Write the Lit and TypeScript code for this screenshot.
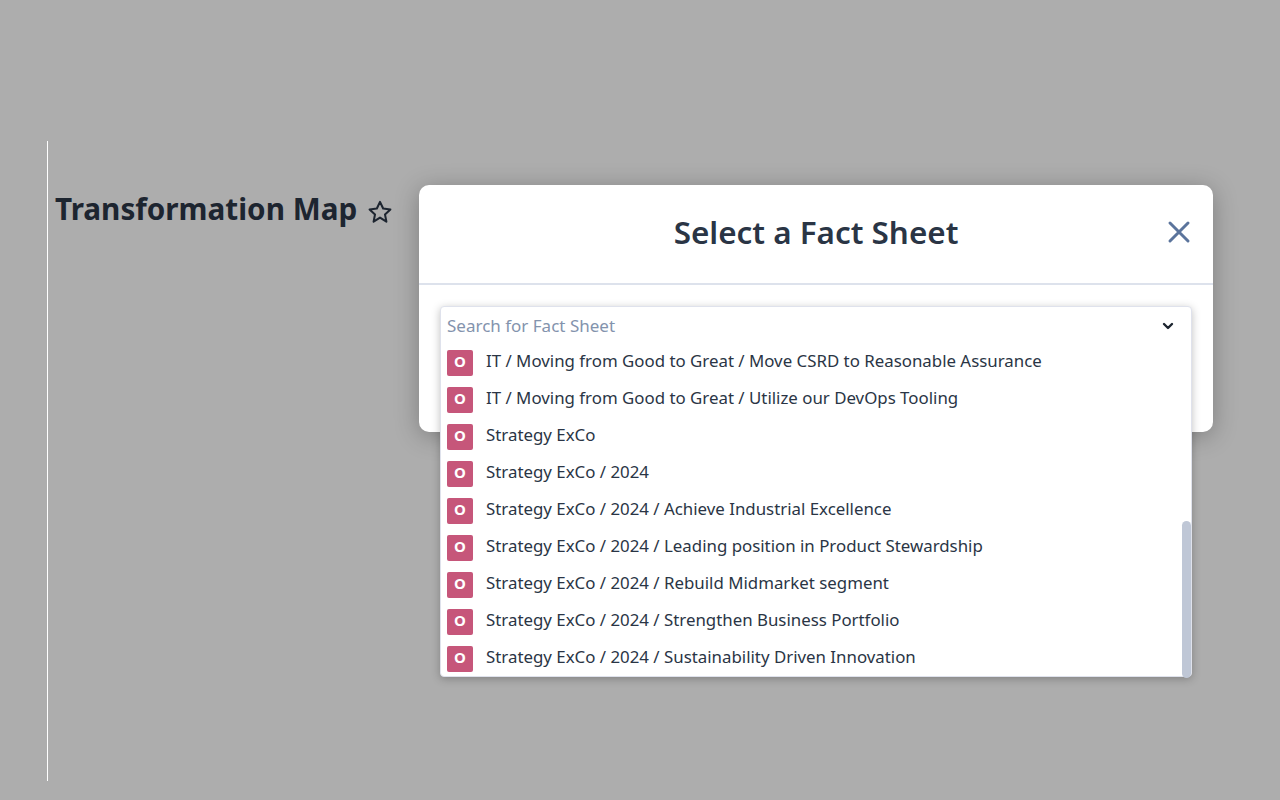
import { LitElement, html, css } from "lit";
import { customElement } from "lit/decorators.js";

const ITEMS = [
  "IT / Moving from Good to Great / Move CSRD to Reasonable Assurance",
  "IT / Moving from Good to Great / Utilize our DevOps Tooling",
  "Strategy ExCo",
  "Strategy ExCo / 2024",
  "Strategy ExCo / 2024 / Achieve Industrial Excellence",
  "Strategy ExCo / 2024 / Leading position in Product Stewardship",
  "Strategy ExCo / 2024 / Rebuild Midmarket segment",
  "Strategy ExCo / 2024 / Strengthen Business Portfolio",
  "Strategy ExCo / 2024 / Sustainability Driven Innovation",
];

@customElement("app-root")
export class AppRoot extends LitElement {
  static styles = css`
    :host {
      display: block;
      width: 1280px;
      height: 800px;
      background: #adadad;
      font-family: "Noto Sans", "Open Sans", sans-serif;
      overflow: hidden;
      position: relative;
    }
    .page {
      box-sizing: border-box;
      height: 800px;
      padding: 141px 0 19px 47px;
      display: flex;
    }
    .content {
      flex: 1;
      border-left: 1px solid #fff;
      padding: 47px 0 0 7px;
    }
    .heading {
      display: flex;
      align-items: center;
      gap: 10px;
    }
    h1 {
      margin: 0;
      font-size: 29.7px;
      line-height: 41px;
      font-weight: 700;
      color: #1d2530;
      white-space: nowrap;
    }
    .star {
      width: 26px;
      height: 26px;
      margin-top: 7px;
      display: block;
    }
    .modal {
      position: absolute;
      left: 419px;
      top: 185px;
      width: 794px;
      height: 247px;
      background: #fff;
      border-radius: 10px;
      box-shadow: 0 4px 24px rgba(0, 0, 0, 0.28);
    }
    .modal-head {
      height: 100px;
      box-sizing: border-box;
      border-bottom: 2px solid #dde2ec;
      display: flex;
      align-items: center;
      justify-content: center;
      position: relative;
    }
    h2 {
      margin: 0;
      font-size: 31.4px;
      font-weight: 600;
      color: #2a3545;
      line-height: 41px;
      position: relative;
      top: -3px;
    }
    .close {
      position: absolute;
      right: 22.5px;
      top: 35px;
      width: 24px;
      height: 24px;
      display: block;
    }
    .dropdown {
      position: absolute;
      left: 440px;
      top: 306px;
      width: 752px;
      height: 371px;
      box-sizing: border-box;
      background: #fff;
      border: 1px solid #dfe2ec;
      border-radius: 4px;
      box-shadow: 0 2px 8px rgba(0, 0, 0, 0.25);
      display: flex;
      flex-direction: column;
    }
    .search {
      flex: none;
      height: 38px;
      padding: 0 16px 0 6px;
      display: flex;
      align-items: center;
      justify-content: space-between;
      color: #8393ad;
      font-size: 17px;
    }
    .search span {
      padding-bottom: 2px;
    }
    .chev {
      width: 14px;
      height: 14px;
      display: block;
    }
    .list {
      flex: 1;
      position: relative;
    }
    .row {
      height: 37px;
      padding-left: 6px;
      display: flex;
      align-items: center;
      gap: 13px;
      font-size: 16.85px;
      color: #2a3545;
      white-space: nowrap;
      position: relative;
      top: -1px;
    }
    .row .label {
      padding-bottom: 4px;
    }
    .badge {
      width: 26px;
      height: 26px;
      flex: none;
      box-sizing: border-box;
      padding-bottom: 3px;
      border-radius: 2px;
      background: #c6567a;
      color: #fff;
      font-size: 15px;
      font-weight: 700;
      display: flex;
      align-items: center;
      justify-content: center;
    }
    .thumb {
      position: absolute;
      right: 0;
      bottom: 0;
      width: 9px;
      height: 157px;
      background: #bfc7d6;
      border-radius: 5px;
    }
  `;

  render() {
    return html`
      <div class="page">
        <div class="content">
          <div class="heading">
            <h1>Transformation Map</h1>
            <svg class="star" viewBox="0 0 24 24" fill="none" stroke="#1d2530" stroke-width="1.9" stroke-linejoin="round">
              <path d="M12 2.6l2.9 6.2 6.7.8-5 4.6 1.3 6.7L12 17.1l-5.9 3.8 1.3-6.7-5-4.6 6.7-.8z" />
            </svg>
          </div>
        </div>
      </div>
      <div class="modal">
        <div class="modal-head">
          <h2>Select a Fact Sheet</h2>
          <svg class="close" viewBox="0 0 24 24" fill="none" stroke="#5b749c" stroke-width="3" stroke-linecap="round">
            <path d="M3 3l18 18M21 3L3 21" />
          </svg>
        </div>
      </div>
      <div class="dropdown">
        <div class="search">
          <span>Search for Fact Sheet</span>
          <svg class="chev" viewBox="0 0 14 14" fill="none" stroke="#1d2530" stroke-width="2.4" stroke-linecap="round" stroke-linejoin="round">
            <path d="M3 5l4 4 4-4" />
          </svg>
        </div>
        <div class="list">
          ${ITEMS.map(
            (t) => html`<div class="row"><span class="badge">O</span><span class="label">${t}</span></div>`
          )}
          <div class="thumb"></div>
        </div>
      </div>
    `;
  }
}
